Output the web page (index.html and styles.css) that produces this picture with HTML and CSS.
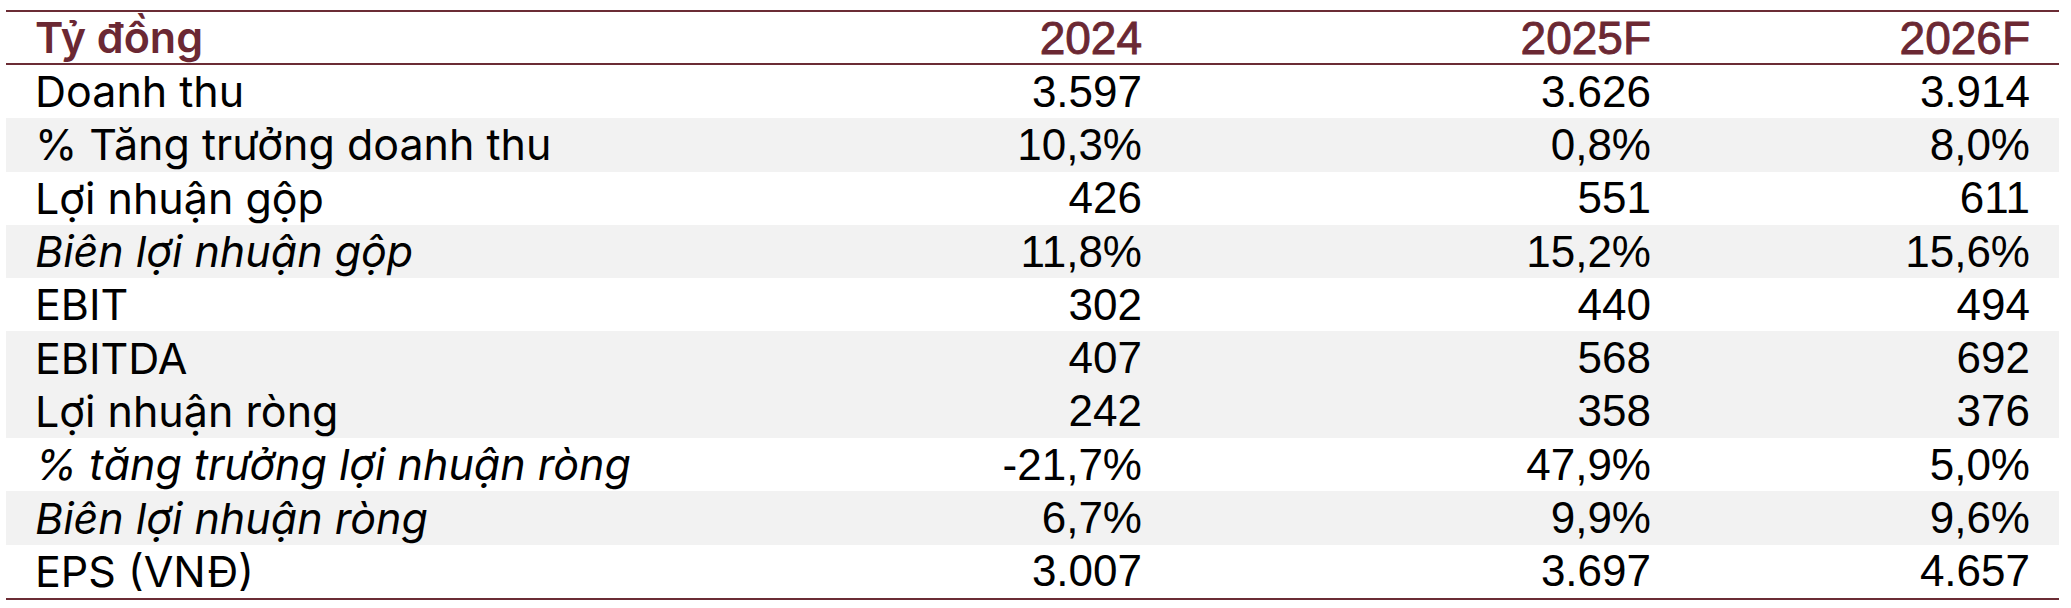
FILE: index.html
```html
<!DOCTYPE html>
<html lang="vi">
<head>
<meta charset="utf-8">
<link rel="stylesheet" href="styles.css">
</head>
<body>
<div class="table">
  <div class="row head">
    <div class="label">Tỷ đồng</div>
    <div class="num">2024</div>
    <div class="num">2025F</div>
    <div class="num">2026F</div>
  </div>
  <div class="row">
    <div class="label">Doanh thu</div>
    <div class="num">3.597</div>
    <div class="num">3.626</div>
    <div class="num">3.914</div>
  </div>
  <div class="row shade">
    <div class="label">% Tăng trưởng doanh thu</div>
    <div class="num">10,3%</div>
    <div class="num">0,8%</div>
    <div class="num">8,0%</div>
  </div>
  <div class="row">
    <div class="label">Lợi nhuận gộp</div>
    <div class="num">426</div>
    <div class="num">551</div>
    <div class="num">611</div>
  </div>
  <div class="row shade">
    <div class="label italic">Biên lợi nhuận gộp</div>
    <div class="num">11,8%</div>
    <div class="num">15,2%</div>
    <div class="num">15,6%</div>
  </div>
  <div class="row">
    <div class="label">EBIT</div>
    <div class="num">302</div>
    <div class="num">440</div>
    <div class="num">494</div>
  </div>
  <div class="row shade">
    <div class="label">EBITDA</div>
    <div class="num">407</div>
    <div class="num">568</div>
    <div class="num">692</div>
  </div>
  <div class="row shade">
    <div class="label">Lợi nhuận ròng</div>
    <div class="num">242</div>
    <div class="num">358</div>
    <div class="num">376</div>
  </div>
  <div class="row">
    <div class="label italic">% tăng trưởng lợi nhuận ròng</div>
    <div class="num">-21,7%</div>
    <div class="num">47,9%</div>
    <div class="num">5,0%</div>
  </div>
  <div class="row shade">
    <div class="label italic">Biên lợi nhuận ròng</div>
    <div class="num">6,7%</div>
    <div class="num">9,9%</div>
    <div class="num">9,6%</div>
  </div>
  <div class="row last">
    <div class="label">EPS (VNĐ)</div>
    <div class="num">3.007</div>
    <div class="num">3.697</div>
    <div class="num">4.657</div>
  </div>
</div>
</body>
</html>
```

FILE: styles.css
```css
html, body {
  margin: 0;
  padding: 0;
  background: #ffffff;
}

body {
  padding: 10px 12px 0 6px;
}

.table {
  width: 2053px;
  border-top: 2px solid #6b2c35;
  border-bottom: 2px solid #6b2c35;
}

.row {
  display: grid;
  grid-template-columns: 656px 509px 509px 379px;
  height: 53.3px;
  align-items: center;
  color: #000;
}

.row.shade {
  background: #f2f2f2;
}

.row.head {
  height: 51px;
  border-bottom: 2px solid #6b2c35;
  color: #6b2833;
}

.label {
  padding-left: 29px;
  font-family: "Inter", "Noto Sans", sans-serif;
  font-size: 43px;
  line-height: 1;
  white-space: nowrap;
}

.label.italic {
  font-style: italic;
}

.num {
  padding-right: 29px;
  text-align: right;
  font-family: "Liberation Sans", Arial, sans-serif;
  font-size: 44px;
  line-height: 1;
  white-space: nowrap;
}

.head .label {
  font-weight: 600;
}

.head .num {
  font-size: 46px;
  -webkit-text-stroke: 0.9px #6b2833;
}
```
